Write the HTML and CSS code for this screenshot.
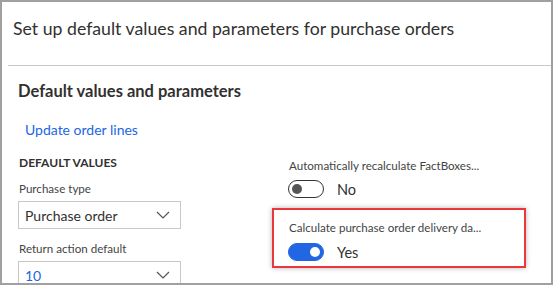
FILE: index.html
```html
<html>
  <head>
    <link rel="stylesheet" href="styles.css">
    <title>Purchase order defaults</title>
  </head>
  <body>
    <div id="dialog">
      <div id="dialogHeader">
        <div id="dialogTitle">Set up default values and parameters for purchase orders</div>
      </div>
      <div id="dialogBody">
        <div id="sectionTitle">Default values and parameters</div>
        <div id="updateLink">Update order lines</div>
        <div id="columns">
          <div class="column leftColumn">
            <div class="groupTitle">DEFAULT VALUES</div>
            <div class="fieldLabel first">Purchase type</div>
            <div class="dropdown">
              <span>Purchase order</span>
              <svg class="chevron" width="14" height="8" viewBox="0 0 14 8"><path d="M1 1 L7 7 L13 1" fill="none" stroke="#555" stroke-width="1.2"/></svg>
            </div>
            <div class="fieldLabel">Return action default</div>
            <div class="dropdown">
              <span class="blueValue">10</span>
              <svg class="chevron" width="14" height="8" viewBox="0 0 14 8"><path d="M1 1 L7 7 L13 1" fill="none" stroke="#555" stroke-width="1.2"/></svg>
            </div>
          </div>
          <div class="column rightColumn">
            <div class="fieldLabel">Automatically recalculate FactBoxes...</div>
            <div class="toggleRow">
              <div class="toggle"><div class="knob"></div></div>
              <span class="toggleText">No</span>
            </div>
            <div id="highlight">
              <div class="fieldLabel">Calculate purchase order delivery da...</div>
              <div class="toggleRow">
                <div class="toggle on"><div class="knob"></div></div>
                <span class="toggleText">Yes</span>
              </div>
            </div>
          </div>
        </div>
      </div>
    </div>
  </body>
</html>
```
FILE: styles.css
```css
* {
  margin: 0;
  padding: 0;
  box-sizing: border-box;
}
body {
  background: white;
  font-family: Lato, "Open Sans", sans-serif;
  color: #323130;
}
#dialog {
  width: 553px;
  height: 285px;
  border: 2px solid #a0a0a0;
  overflow: hidden;
  background: white;
}
#dialogHeader {
  height: 64px;
  margin-left: 6px;
  border-bottom: 1px solid #c8c8c8;
  padding-top: 15px;
  padding-left: 5px;
}
#dialogTitle {
  font-size: 17.7px;
  line-height: 24px;
}
#dialogBody {
  padding-left: 16px;
}
#sectionTitle {
  margin-top: 15px;
  font-size: 16.5px;
  font-weight: 700;
  line-height: 20px;
}
#updateLink {
  margin-top: 20px;
  margin-left: 7px;
  font-size: 14px;
  line-height: 18px;
  color: #2266e3;
}
#columns {
  display: flex;
  margin-top: 17px;
}
.leftColumn {
  width: 163px;
}
.rightColumn {
  margin-left: 107px;
  padding-top: 3px;
}
.groupTitle {
  font-size: 12px;
  font-weight: 700;
  line-height: 14px;
  padding-left: 1px;
}
.fieldLabel {
  font-size: 11.6px;
  line-height: 14px;
  color: #444;
  padding-left: 1px;
  margin-top: 13px;
}
.fieldLabel.first {
  margin-top: 12px;
}
.rightColumn > .fieldLabel {
  margin-top: 0;
}
.dropdown {
  margin-top: 5px;
  height: 28px;
  border: 1px solid #c8c8c8;
  display: flex;
  align-items: center;
  justify-content: space-between;
  padding: 0 10px 0 6px;
  font-size: 14px;
}
.blueValue {
  color: #2266e3;
}
.toggleRow {
  display: flex;
  align-items: center;
  margin-top: 7px;
}
.toggle {
  width: 36px;
  height: 18px;
  border: 1px solid #333;
  border-radius: 9px;
  display: flex;
  align-items: center;
  padding: 0 3px;
}
.knob {
  width: 10px;
  height: 10px;
  border-radius: 50%;
  background: #555;
}
.toggle.on {
  background: #2266e3;
  border-color: #2266e3;
  justify-content: flex-end;
}
.toggle.on .knob {
  background: white;
}
.toggleText {
  margin-left: 13px;
  font-size: 14.5px;
}
#highlight {
  margin-top: 10px;
  margin-left: -16px;
  width: 254px;
  height: 60px;
  border: 2px solid #e8383d;
  box-shadow: 0 0 5px rgba(0, 0, 0, 0.3);
  padding: 11px 0 0 14px;
}
#highlight .fieldLabel {
  margin-top: 0;
}
#highlight .toggleRow {
  margin-top: 8px;
}
```
